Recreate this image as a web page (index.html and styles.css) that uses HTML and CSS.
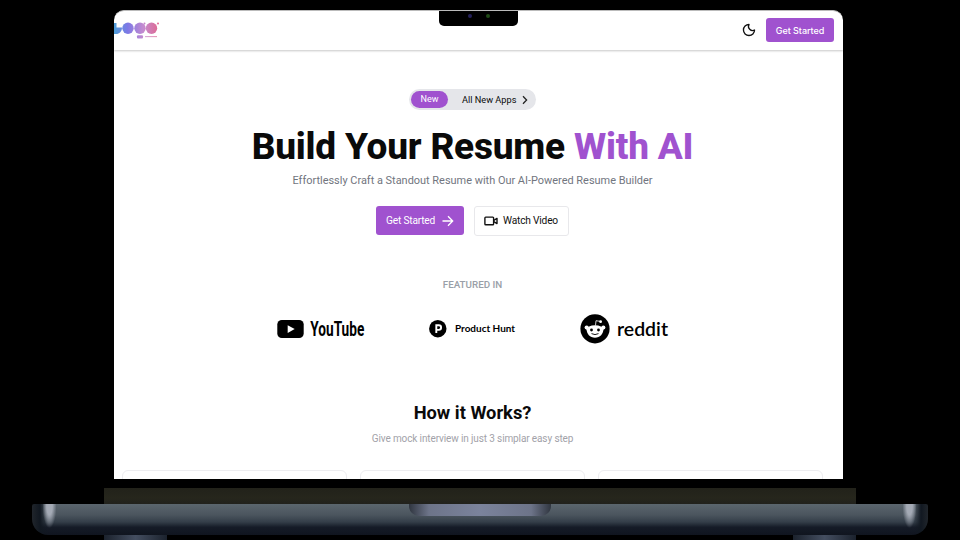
FILE: index.html
```html
<!DOCTYPE html>
<html lang="en">
<head>
<meta charset="utf-8">
<title>AI Resume Builder</title>
<link rel="stylesheet" href="styles.css">
</head>
<body>
<div class="laptop">
  <div class="screen">
    <div class="notch"><i class="led blue"></i><i class="led green"></i></div>
    <header class="topbar">
      <svg class="logo" width="48" height="20" viewBox="0 0 48 20" role="img" aria-label="Logo">
        <defs><linearGradient id="lg" gradientUnits="userSpaceOnUse" x1="0" y1="0" x2="45" y2="0"><stop offset="0" stop-color="#4d9fd8"/><stop offset=".3" stop-color="#7d78e6"/><stop offset=".65" stop-color="#c48bd0"/><stop offset="1" stop-color="#e0688f"/></linearGradient></defs>
        <g fill="url(#lg)">
          <path d="M0 3h2.500v4.500h5.500c0 4-2.500 6.500-6 6.500h-2z"/>
          <circle cx="14" cy="8.200" r="5.700"/><circle cx="26" cy="8.200" r="5.700"/><circle cx="37.500" cy="8.200" r="5.700"/>
          <circle cx="30.500" cy="3.500" r="1"/><circle cx="44" cy="3.500" r="1"/>
          <rect x="23" y="15.200" width="6" height="3.200" rx="1"/><rect x="31" y="16.300" width="12" height=".8"/>
        </g>
      </svg>
      <div class="actions">
        <svg class="moon" width="14" height="14" viewBox="0 0 24 24" fill="none" stroke="#111" stroke-width="2.300" stroke-linejoin="round"><path d="M12 2.500a7 7 0 0 0 9.500 9.500A9.500 9.500 0 1 1 12 2.500z"/></svg>
        <a class="btn btn-small">Get Started</a>
      </div>
    </header>
    <main class="content">
      <div class="pill"><span class="tag">New</span><span class="pill-text">All New Apps</span>
        <svg width="6" height="10" viewBox="0 0 6 10" fill="none" stroke="#222" stroke-width="1.300"><path d="M1 1.300L4.600 5 1 8.700"/></svg></div>
      <h1>Build Your Resume <span>With AI</span></h1>
      <p class="lead">Effortlessly Craft a Standout Resume with Our AI-Powered Resume Builder</p>
      <div class="cta">
        <a class="btn btn-main">Get Started<svg width="12" height="12" viewBox="0 0 12 12" fill="none" stroke="#fff" stroke-width="1.300"><path d="M.5 6h10M6 1.300L10.700 6 6 10.700"/></svg></a>
        <a class="btn btn-video"><svg width="14" height="10" viewBox="0 0 14 10" fill="none" stroke="#111" stroke-width="1.400" stroke-linejoin="round"><rect x=".9" y="1.100" width="8.700" height="7.600" rx=".8"/><path d="M9.800 4.300L13 2.400v5.200L9.800 5.700"/></svg>Watch Video</a>
      </div>
      <p class="featured">FEATURED IN</p>
      <div class="brands">
        <svg class="youtube" width="90" height="30" viewBox="0 0 90 30">
          <rect x=".3" y="6" width="26.400" height="18" rx="4.500"/><path d="M10.700 11.200l7 3.900-7 3.900z" fill="#fff"/>
          <text x="33.300" y="22" textLength="54" lengthAdjust="spacingAndGlyphs">YouTube</text>
        </svg>
        <svg class="producthunt" width="87" height="30" viewBox="0 0 87 30">
          <circle cx="7.800" cy="14.700" r="8.700"/><path d="M6.300 19v-7.700h2.500a2.300 2.300 0 0 1 0 4.600H6.300" fill="none" stroke="#fff" stroke-width="1.900"/>
          <text x="25" y="18" textLength="60" lengthAdjust="spacingAndGlyphs">Product Hunt</text>
        </svg>
        <svg class="reddit" width="90" height="30" viewBox="0 0 90 30">
          <circle cx="15" cy="14.800" r="14.600"/>
          <g fill="#fff"><path d="M6.500 14.500h17c0 5.500-3.500 9.300-8.500 9.300s-8.500-3.800-8.500-9.300z"/><ellipse cx="15" cy="15.500" rx="8.300" ry="4.300"/><circle cx="6.700" cy="13.500" r="2.100"/><circle cx="23.300" cy="13.500" r="2.100"/><circle cx="20.600" cy="7.700" r="1.400"/></g>
          <path d="M15.500 11.500l.5-4.800 4.300 .7" fill="none" stroke="#fff" stroke-width=".8"/>
          <circle cx="11.500" cy="16" r="1.400"/><circle cx="18.500" cy="16" r="1.400"/><path d="M11.500 19.600q3.500 2 7 0" fill="none" stroke="#000" stroke-width=".9"/>
          <text x="37" y="21.500" textLength="51" lengthAdjust="spacingAndGlyphs">reddit</text>
        </svg>
      </div>
      <h2>How it Works?</h2>
      <p class="sub">Give mock interview in just 3 simplar easy step</p>
      <div class="steps"><div class="step"></div><div class="step"></div><div class="step"></div></div>
    </main>
  </div>
  <div class="hinge"></div>
  <div class="base"><div class="lip"></div></div>
  <div class="feet"><div class="foot"></div><div class="foot"></div></div>
</div>
</body>
</html>
```

FILE: styles.css
```css
* { box-sizing: border-box; }
body { margin: 0; width: 960px; height: 540px; overflow: hidden; background: #000; font-family: Roboto, "Liberation Sans", sans-serif; }
h1, h2, p { margin: 0; white-space: nowrap; }
svg { display: block; flex: none; overflow: visible; }
.laptop { height: 540px; padding-top: 10px; display: flex; flex-direction: column; overflow: hidden; }
.screen { position: relative; flex: none; width: 728.5px; height: 468.500px; margin-left: 114px; background: #fff; border-top: 1px solid #bbb; border-radius: 10px 10px 0 0; overflow: hidden; }
.notch { position: absolute; top: -1px; left: 325px; width: 79px; height: 16px; background: #000; border-radius: 0 0 5px 5px; }
.led { position: absolute; top: 4px; width: 4px; height: 4px; border-radius: 50%; filter: blur(.6px); }
.blue { left: 29px; background: #24205c; }
.green { left: 47px; background: #1f4a16; }
.topbar { height: 39px; padding-right: 8.500px; display: flex; align-items: center; justify-content: space-between; box-shadow: 0 1px 2px rgba(0, 0, 0, .22); }
.logo { margin-top: -1px; }
.actions { display: flex; align-items: center; gap: 10px; margin-top: -1px; }
.btn { display: flex; align-items: center; border-radius: 3px; background: #a052cf; color: #fff; white-space: nowrap; }
.btn-small { width: 68px; height: 24px; justify-content: center; font: 500 9px Inter, sans-serif; letter-spacing: -.05px; }
.content { display: flex; flex-direction: column; align-items: center; padding: 39px 19.500px 0 8px; color: #0a0a0a; }
.pill { width: 127px; height: 21px; border-radius: 11px; background: #e5e6ea; padding: 2px; display: flex; align-items: center; }
.tag { width: 37px; height: 17px; border-radius: 9px; background: #a052cf; color: #fff; font-size: 9px; font-weight: 400; line-height: 17px; text-align: center; }
.pill-text { margin: 0 6px 0 14px; width: 54px; font-size: 9.200px; white-space: nowrap; }
h1 { margin-top: 15px; height: 44px; line-height: 44px; font-size: 37px; font-weight: 800; letter-spacing: -.22px; }
h1 span { color: #a052cf; }
.lead { margin-top: 4px; height: 16px; line-height: 16px; font-size: 10.950px; color: #71757e; }
.cta { margin-top: 17px; display: flex; gap: 10px; }
.btn-main { width: 88px; height: 29px; padding-left: 10px; gap: 7px; font-size: 10.200px; letter-spacing: -.2px; }
.btn-video { width: 95px; height: 30px; padding: 0 0 1px 9px; gap: 5px; background: #fff; border: 1px solid #e8e8eb; color: #111; font-size: 10.200px; letter-spacing: -.2px; }
.featured { margin-top: 42px; height: 14px; line-height: 14px; font-size: 9.800px; color: #9a9fa8; font-weight: 500; }
.brands { margin: 22px 0 0 2px; width: 393px; display: flex; justify-content: space-between; }
.youtube text { font: 700 21px Roboto, sans-serif; }
.producthunt text { font: 700 9.300px Lato, sans-serif; }
.reddit text { font: 600 19px Lato, sans-serif; }
h2 { margin-top: 57px; height: 24px; line-height: 24px; font-size: 18.300px; font-weight: 700; }
.sub { margin-top: 6px; height: 16px; line-height: 16px; font-size: 10px; letter-spacing: -.12px; color: #a2a2a9; }
.steps { margin-top: 23px; width: 701px; display: grid; grid-template-columns: repeat(3, 225px); justify-content: space-between; }
.step { height: 60px; border: 1px solid #ededf0; border-radius: 6px; }
.hinge { flex: none; width: 752px; height: 16px; margin: 9.500px 0 0 104px; background: linear-gradient(#22221a, #26261c 60%, #22221d); }
.base { flex: none; width: 896px; height: 31px; margin-left: 32px; border-radius: 2px 2px 16px 16px; display: flex; justify-content: center; background: radial-gradient(ellipse 7px 22px at 17.500px 2px, #a4aab5 40%, transparent), radial-gradient(ellipse 7px 22px at 877.500px 2px, #a4aab5 40%, transparent), linear-gradient(90deg, #20252b 0, #111821 8px, transparent 16px, transparent 882px, #111821 889px, #20252b), linear-gradient(#5b666e 0, #4b555e 35%, #343e49 58%, #151b27 75%, #10151f 100%); }
.lip { width: 142px; height: 12px; border-radius: 0 0 10px 10px; background: linear-gradient(90deg, #303640, #6d7489 14%, #7b839c 50%, #6d7489 86%, #303640); }
.feet { display: flex; justify-content: space-between; padding: 0 104px; }
.foot { width: 63px; height: 5px; background: linear-gradient(90deg, #1b222d, #444e60 50%, #1b222d); }
```
